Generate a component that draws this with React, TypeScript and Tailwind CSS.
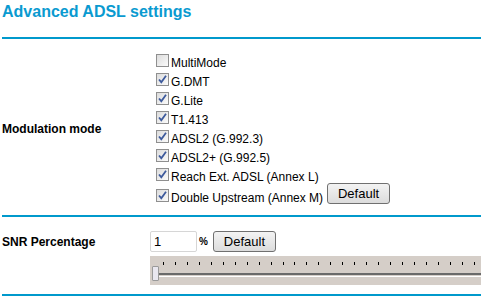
import React from "react";

const MODES = [
  { label: "MultiMode", checked: false },
  { label: "G.DMT", checked: true },
  { label: "G.Lite", checked: true },
  { label: "T1.413", checked: true },
  { label: "ADSL2 (G.992.3)", checked: true },
  { label: "ADSL2+ (G.992.5)", checked: true },
  { label: "Reach Ext. ADSL (Annex L)", checked: true },
];

const TICKS = Array.from({ length: 27 }, (_, i) => i);

function Check({ checked }: { checked: boolean }) {
  return (
    <span className="ml-[3px] mr-[2px] flex h-[13px] w-[13px] shrink-0 items-center justify-center border border-[#8f8f8f] bg-gradient-to-br from-[#dcdcdc] to-[#fbfbfb]">
      {checked && (
        <svg width="11" height="11" viewBox="0 0 11 11">
          <path d="M2 5.5 L4.3 8.2 L9 1.8" fill="none" stroke="#3d5a9c" strokeWidth="1.8" />
        </svg>
      )}
    </span>
  );
}

function DefaultButton() {
  return (
    <button className="h-[21px] w-[63px] rounded-[3px] border border-[#707070] bg-gradient-to-b from-[#f3f3f3] to-[#dcdcdc] text-[13px] leading-none text-black">
      Default
    </button>
  );
}

export default function App() {
  return (
    <div className="h-[302px] w-[485px] bg-white pl-[2px] font-['Liberation_Sans',Arial,sans-serif] text-[12px] text-black">
      <div className="w-[479px]">
        <h1 className="h-[37px] pt-[2px] text-[16px] font-bold leading-[20px] text-[#0a9ad0]">Advanced ADSL settings</h1>

        {/* Modulation */}
        <div className="flex items-center border-t-2 border-[#0099cc] pt-[12px] pb-[9px]">
          <div className="w-[151px] font-bold">Modulation mode</div>
          <div className="flex flex-col">
            {MODES.map((m) => (
              <div key={m.label} className="flex h-[19px] items-start">
                <div className="mt-[3px]">
                  <Check checked={m.checked} />
                </div>
                <span className="mt-[5px] leading-[14px]">{m.label}</span>
              </div>
            ))}
            <div className="flex h-[22px] items-start">
              <div className="mt-[5px]">
                <Check checked />
              </div>
              <span className="mr-[4px] mt-[7px] leading-[14px]">Double Upstream (Annex M)</span>
              <div className="-mt-px">
                <DefaultButton />
              </div>
            </div>
          </div>
        </div>

        {/* SNR */}
        <div className="flex items-start border-t-2 border-[#0099cc] pt-[14px] pb-[9px]">
          <div className="flex h-[21px] w-[148px] items-center font-bold">SNR Percentage</div>
          <div className="flex flex-1 flex-col">
            <div className="flex items-center">
              <input
                defaultValue="1"
                className="h-[21px] w-[47px] rounded-[2px] border border-[#d6d6d6] px-[3px] text-[13px] outline-none"
              />
              <span className="ml-[2px] mr-[5px] text-[10px] font-bold">%</span>
              <DefaultButton />
            </div>
            <div className="relative mt-[4px] h-[29px] bg-[#d5cec8]">
              <div className="flex justify-between pl-[13px] pr-[6px] pt-[6px]">
                {TICKS.map((t) => (
                  <span key={t} className="h-[3px] w-px bg-black" />
                ))}
              </div>
              <div className="ml-[2px] mt-[8px] h-[2px] bg-[#6a6a6a]" />
              <div className="ml-[2px] mt-px h-px bg-white" />
              <span className="absolute left-[2px] top-[10px] h-[15px] w-[7px] rounded-[1px] border border-[#9a9a9a] bg-[#e9e7ef]" />
            </div>
          </div>
        </div>
        <div className="h-[2px] bg-[#0099cc]" />
      </div>
    </div>
  );
}
